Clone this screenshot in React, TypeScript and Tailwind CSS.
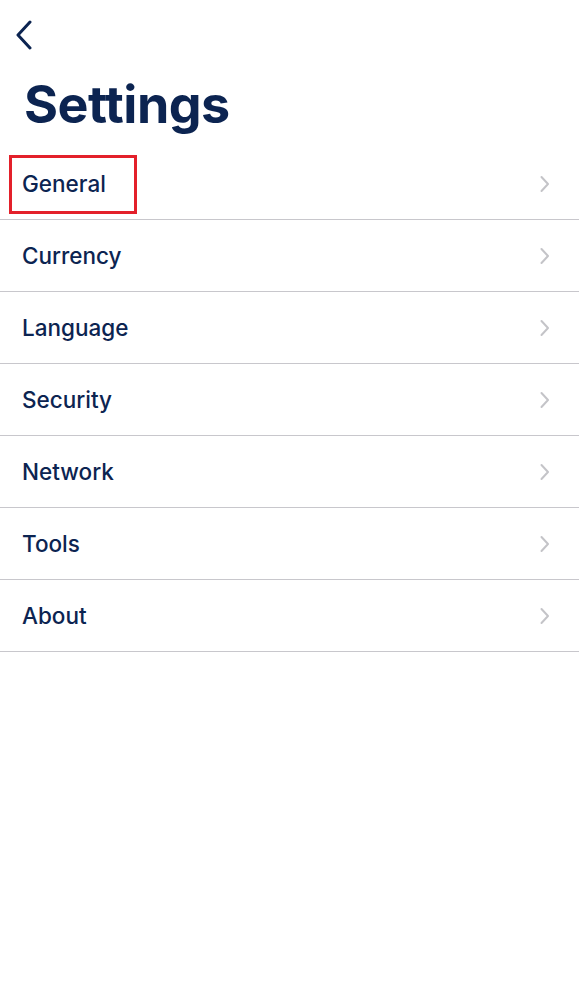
import React from "react";

const items = ["General", "Currency", "Language", "Security", "Network", "Tools", "About"];

function Chevron() {
  return (
    <svg width="12" height="18" viewBox="0 0 12 18" fill="none">
      <path d="M2.5 2L9 9L2.5 16" stroke="#c4c4c8" strokeWidth="2" strokeLinecap="round" strokeLinejoin="round" />
    </svg>
  );
}

export default function App() {
  return (
    <div className="w-[579px] h-[1000px] bg-white text-[#0c2451]" style={{ fontFamily: "Inter, 'Noto Sans', sans-serif" }}>
      <div className="pt-[20px] pl-[14px] h-[50px]">
        <svg width="20" height="30" viewBox="0 0 20 30" fill="none">
          <path d="M16 2L4 15L16 28" stroke="#0c2451" strokeWidth="3" strokeLinecap="round" strokeLinejoin="round" />
        </svg>
      </div>
      <h1 className="pl-[24px] mt-[25px] text-[52px] leading-[60px] font-bold tracking-[-0.5px]">Settings</h1>
      <div className="mt-[13px]">
        {items.map((it, i) => (
          <div key={it} className="relative h-[72px] flex items-center justify-between pl-[22px] pr-[28px] border-b border-[#c8c7cc]">
            <span className="text-[22.5px] font-medium">{it}</span>
            <Chevron />
            {i === 0 && (
              <div className="absolute left-[9px] top-[7px] w-[128px] h-[59px] border-[3px] border-[#e3202a]" />
            )}
          </div>
        ))}
      </div>
    </div>
  );
}
